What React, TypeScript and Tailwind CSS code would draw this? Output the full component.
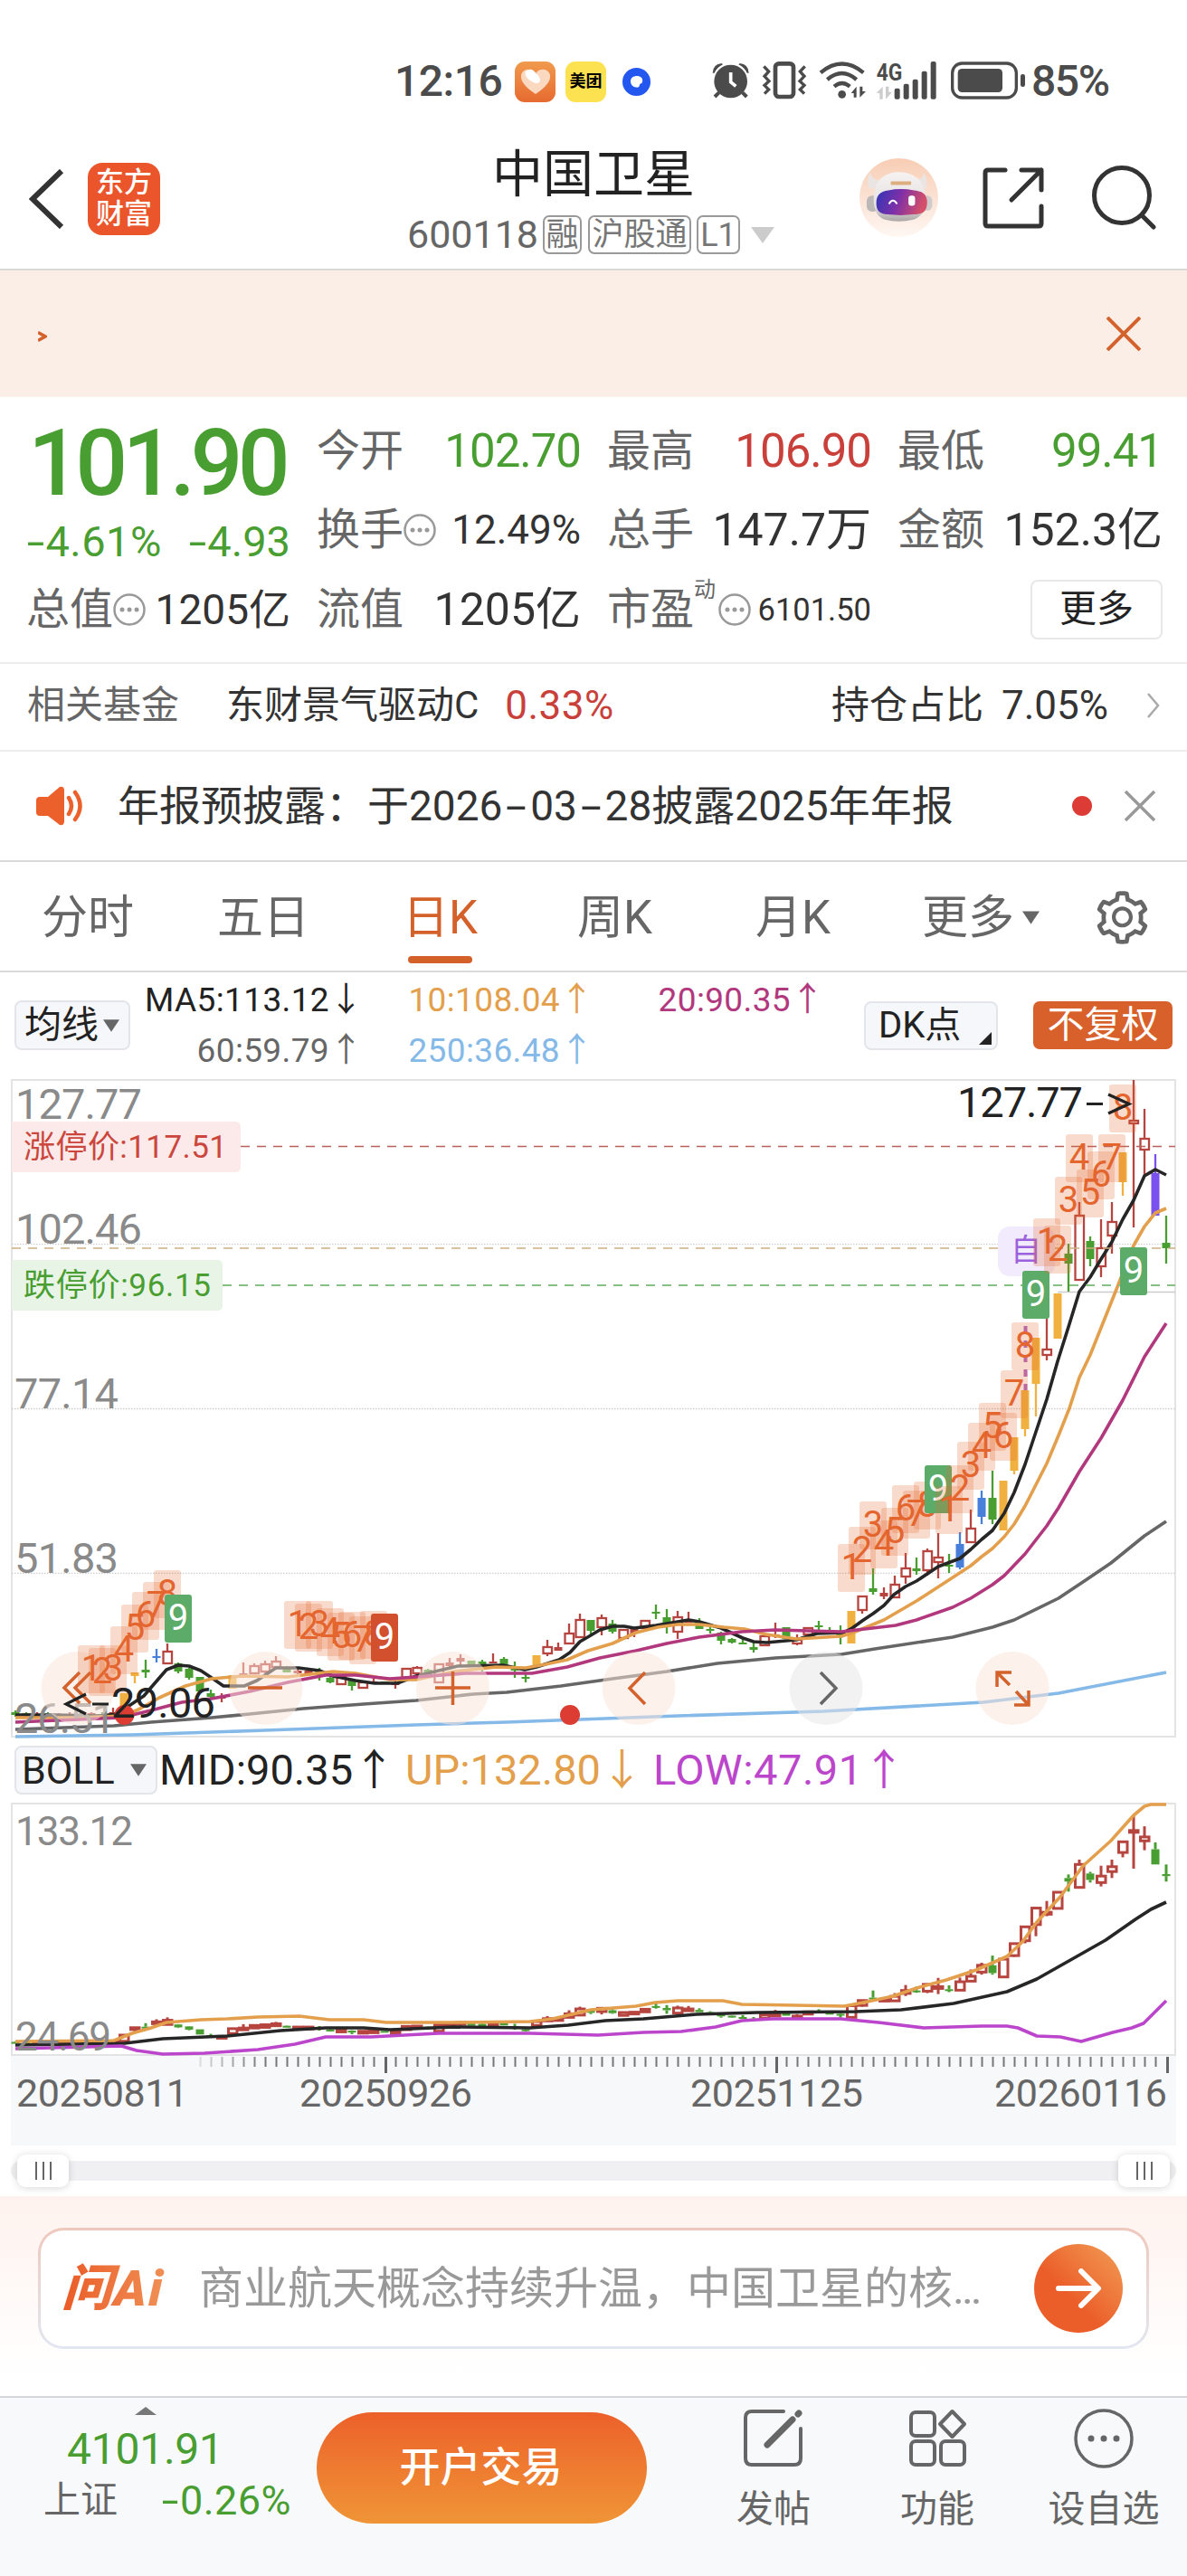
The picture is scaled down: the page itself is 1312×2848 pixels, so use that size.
import type { ReactNode } from "react";
import { AiOutlineSetting } from "react-icons/ai";

type Kind = "up" | "upSolid" | "down" | "gold" | "blue" | "violet";

// [kind, high, bodyTop, bodyBottom, low], one entry per trading day
const candles: [Kind, number, number, number, number][] = [
  ["down", 1891, 1893, 1896, 1898],
  ["down", 1893, 1894, 1897, 1899],
  ["upSolid", 1893, 1895, 1898, 1900],
  ["down", 1893, 1895, 1897, 1899],
  ["upSolid", 1894, 1895, 1898, 1900],
  ["upSolid", 1893, 1895, 1897, 1899],
  ["down", 1893, 1895, 1898, 1900],
  ["upSolid", 1893, 1894, 1896, 1899],
  ["down", 1893, 1895, 1897, 1899],
  ["upSolid", 1888, 1893, 1896, 1899],
  ["gold", 1872, 1872, 1891, 1891],
  ["gold", 1849, 1849, 1853, 1861],
  ["down", 1835, 1846, 1849, 1855],
  ["blue", 1823, 1831, 1832, 1838],
  ["up", 1817, 1826, 1839, 1839],
  ["down", 1838, 1839, 1848, 1850],
  ["down", 1844, 1845, 1855, 1857],
  ["down", 1854, 1854, 1870, 1870],
  ["down", 1868, 1872, 1876, 1877],
  ["upSolid", 1872, 1876, 1878, 1882],
  ["gold", 1852, 1852, 1867, 1867],
  ["upSolid", 1838, 1850, 1852, 1852],
  ["up", 1839, 1842, 1850, 1850],
  ["up", 1836, 1840, 1848, 1850],
  ["up", 1831, 1837, 1843, 1846],
  ["down", 1842, 1843, 1849, 1849],
  ["upSolid", 1844, 1847, 1850, 1853],
  ["upSolid", 1846, 1847, 1851, 1851],
  ["down", 1844, 1847, 1852, 1858],
  ["down", 1853, 1855, 1860, 1861],
  ["up", 1854, 1854, 1862, 1862],
  ["down", 1857, 1858, 1864, 1869],
  ["up", 1860, 1860, 1866, 1866],
  ["upSolid", 1855, 1859, 1861, 1861],
  ["down", 1859, 1859, 1862, 1862],
  ["upSolid", 1857, 1861, 1863, 1867],
  ["up", 1845, 1845, 1855, 1855],
  ["up", 1842, 1844, 1850, 1852],
  ["down", 1845, 1846, 1850, 1850],
  ["up", 1839, 1840, 1860, 1860],
  ["upSolid", 1833, 1838, 1842, 1843],
  ["upSolid", 1829, 1833, 1837, 1843],
  ["down", 1836, 1836, 1843, 1843],
  ["down", 1835, 1837, 1845, 1848],
  ["upSolid", 1828, 1837, 1839, 1839],
  ["down", 1832, 1834, 1842, 1842],
  ["down", 1837, 1844, 1847, 1855],
  ["down", 1849, 1854, 1856, 1860],
  ["gold", 1830, 1830, 1842, 1842],
  ["up", 1813, 1821, 1828, 1831],
  ["upSolid", 1816, 1821, 1825, 1825],
  ["up", 1795, 1806, 1817, 1817],
  ["up", 1784, 1791, 1810, 1810],
  ["down", 1791, 1791, 1803, 1807],
  ["up", 1785, 1789, 1799, 1808],
  ["down", 1791, 1795, 1804, 1806],
  ["up", 1801, 1802, 1811, 1811],
  ["upSolid", 1800, 1801, 1806, 1810],
  ["up", 1791, 1792, 1800, 1800],
  ["down", 1774, 1782, 1784, 1790],
  ["down", 1779, 1788, 1795, 1806],
  ["up", 1781, 1788, 1804, 1812],
  ["upSolid", 1782, 1791, 1794, 1794],
  ["down", 1789, 1794, 1801, 1801],
  ["down", 1798, 1801, 1803, 1806],
  ["down", 1804, 1805, 1814, 1818],
  ["down", 1811, 1812, 1816, 1817],
  ["down", 1810, 1816, 1817, 1817],
  ["down", 1816, 1821, 1824, 1827],
  ["up", 1808, 1809, 1819, 1819],
  ["upSolid", 1794, 1807, 1809, 1811],
  ["down", 1799, 1799, 1812, 1812],
  ["up", 1807, 1813, 1817, 1819],
  ["up", 1799, 1800, 1807, 1807],
  ["down", 1792, 1797, 1799, 1802],
  ["down", 1799, 1803, 1804, 1807],
  ["down", 1797, 1806, 1808, 1818],
  ["gold", 1781, 1781, 1817, 1817],
  ["up", 1764, 1765, 1780, 1784],
  ["down", 1734, 1756, 1760, 1763],
  ["upSolid", 1755, 1761, 1765, 1768],
  ["up", 1742, 1752, 1766, 1767],
  ["up", 1717, 1734, 1743, 1751],
  ["down", 1722, 1734, 1737, 1741],
  ["up", 1712, 1715, 1736, 1742],
  ["up", 1695, 1722, 1727, 1745],
  ["down", 1718, 1730, 1732, 1739],
  ["blue", 1694, 1707, 1733, 1735],
  ["up", 1669, 1690, 1705, 1706],
  ["blue", 1648, 1656, 1677, 1685],
  ["down", 1626, 1656, 1680, 1685],
  ["gold", 1637, 1637, 1692, 1692],
  ["gold", 1589, 1589, 1626, 1630],
  ["gold", 1537, 1537, 1580, 1588],
  ["gold", 1479, 1479, 1530, 1566],
  ["up", 1457, 1492, 1498, 1504],
  ["gold", 1430, 1430, 1480, 1480],
  ["down", 1375, 1386, 1397, 1428],
  ["up", 1329, 1344, 1415, 1416],
  ["down", 1367, 1372, 1392, 1400],
  ["up", 1348, 1380, 1400, 1412],
  ["up", 1329, 1351, 1366, 1386],
  ["gold", 1274, 1274, 1307, 1322],
  ["up", 1194, 1239, 1242, 1357],
  ["up", 1226, 1259, 1271, 1300],
  ["violet", 1276, 1297, 1344, 1344],
  ["down", 1344, 1374, 1380, 1397],
];

// [day index, top, count, solid fill]
const marks: [number, number, string, string?][] = [
  [7, 1819, "1"], [8, 1822, "2"], [9, 1819, "3"], [10, 1798, "4"],
  [11, 1774, "5"], [12, 1760, "6"], [13, 1749, "7"], [14, 1736, "8"],
  [15, 1763, "9", "#5cab69"],
  [26, 1770, "1"], [27, 1773, "2"], [28, 1770, "3"], [29, 1778, "4"],
  [30, 1783, "5"], [31, 1782, "6"], [32, 1787, "7"], [33, 1781, "8"],
  [34, 1784, "9", "#d2502d"],
  [77, 1707, "1"], [78, 1688, "2"], [79, 1660, "3"], [80, 1681, "4"],
  [81, 1667, "5"], [82, 1642, "6"], [83, 1648, "7"], [84, 1638, "8"],
  [85, 1620, "9", "#5cab69"],
  [86, 1643, "1"], [87, 1620, "2"], [88, 1594, "3"], [89, 1573, "4"],
  [90, 1551, "5"], [91, 1562, "6"], [92, 1515, "7"], [93, 1462, "8"],
  [94, 1405, "9", "#5cab69"],
  [95, 1347, "1"], [96, 1355, "2"], [97, 1301, "3"], [98, 1254, "4"],
  [99, 1293, "5"], [100, 1273, "6"], [101, 1254, "7"], [102, 1199, "8"],
  [103, 1379, "9", "#5cab69"],
];

const ma5 =
  "17,1896 60,1896 110,1897 130,1895 144,1885 159,1875 171,1861 184,1846 197,1841 209,1842 222,1847 234,1855 247,1864 270,1864 284,1858 305,1844 330,1844 353,1847 368,1853 393,1858 414,1861 439,1861 460,1853 485,1847 506,1842 556,1841 580,1846 593,1843 618,1835 630,1827 641,1815 653,1808 663,1802 677,1798 690,1798 701,1800 725,1797 761,1791 773,1793 797,1800 821,1811 833,1815 847,1816 880,1813 903,1806 932,1805 942,1800 953,1792 965,1784 977,1775 988,1763 1001,1754 1013,1748 1037,1732 1061,1723 1073,1713 1085,1702 1097,1692 1110,1673 1121,1650 1133,1619 1145,1583 1157,1547 1169,1505 1181,1467 1193,1428 1205,1412 1217,1392 1229,1373 1241,1348 1253,1327 1265,1300 1277,1293 1289,1299";
const ma10 =
  "17,1899 84,1899 138,1897 155,1889 176,1877 205,1864 234,1856 268,1853 318,1854 368,1848 393,1850 431,1857 460,1857 502,1848 548,1843 581,1844 603,1840 627,1835 650,1825 677,1817 703,1805 727,1799 749,1796 773,1796 800,1799 823,1801 847,1807 880,1812 930,1809 943,1805 977,1791 1001,1777 1013,1770 1047,1748 1073,1731 1085,1721 1097,1712 1110,1699 1121,1685 1133,1665 1157,1618 1170,1587 1182,1557 1193,1523 1205,1498 1233,1428 1253,1377 1265,1356 1277,1341 1289,1336";
const ma20 =
  "17,1904 134,1899 167,1891 201,1882 234,1878 276,1870 318,1860 360,1852 393,1852 431,1856 460,1854 515,1850 588,1850 627,1843 663,1833 703,1825 737,1817 773,1810 820,1804 857,1802 893,1803 930,1804 990,1797 1013,1791 1053,1777 1073,1767 1097,1752 1110,1742 1133,1718 1157,1687 1170,1667 1193,1627 1217,1590 1241,1548 1265,1500 1289,1463";
const ma60 =
  "17,1912 126,1908 167,1904 234,1899 276,1895 335,1889 402,1884 460,1880 523,1873 560,1871 620,1864 677,1856 737,1848 793,1839 857,1833 930,1829 967,1823 1053,1810 1097,1799 1121,1791 1170,1767 1200,1747 1228,1728 1265,1698 1289,1682";
const ma250 = "17,1920 146,1918 293,1913 460,1907 560,1904 750,1897 910,1892 1087,1882 1170,1872 1289,1849";

const bollUp =
  "17,2257 126,2256 146,2248 167,2242 184,2236 222,2233 251,2232 285,2230 331,2229 364,2233 402,2233 427,2236 502,2236 586,2235 611,2232 653,2222 703,2218 724,2214 749,2212 799,2212 820,2216 879,2217 933,2218 954,2214 987,2207 1013,2198 1046,2189 1079,2178 1113,2163 1130,2147 1146,2125 1172,2097 1197,2063 1228,2035 1253,2007 1265,1997 1272,1995 1289,1995";
const bollMid =
  "17,2261 138,2259 180,2254 251,2251 310,2245 360,2242 402,2242 431,2244 502,2241 586,2242 628,2239 669,2234 711,2232 770,2227 837,2225 946,2224 996,2222 1054,2215 1113,2202 1146,2188 1192,2162 1222,2145 1255,2122 1272,2111 1289,2103";
const bollLow =
  "17,2265 134,2262 151,2267 180,2271 226,2270 285,2266 326,2260 360,2252 410,2252 485,2248 586,2248 661,2250 711,2247 753,2246 791,2241 820,2234 854,2232 929,2232 971,2236 1021,2242 1085,2240 1113,2240 1125,2242 1146,2251 1172,2252 1195,2257 1230,2247 1251,2242 1264,2237 1276,2225 1289,2212";

const colors: Record<Kind, string> = {
  up: "#b6443f",
  upSolid: "#b6443f",
  down: "#489e30",
  gold: "#f0b140",
  blue: "#487fdb",
  violet: "#7a50ee",
};

const dayX = (i: number) => 17 + i * 12;
const toBoll = (y: number) => 2007.7 + (y - 1194) * 0.3574;

function Candle({ x, color, hollow, high, top, bottom, low, stroke = 2.3 }: { x: number; color: string; hollow: boolean; high: number; top: number; bottom: number; low: number; stroke?: number }) {
  const h = Math.max(bottom - top, 2);
  return (
    <g stroke={color} strokeWidth={stroke}>
      {high < top && <line x1={x} x2={x} y1={high} y2={top} />}
      {low > bottom && <line x1={x} x2={x} y1={bottom} y2={low} />}
      {hollow ? (
        <rect x={x - 4.5} y={top} width="9.5" height={h} fill="white" />
      ) : (
        <rect x={x - 4.5} y={top} width="9" height={h} fill={color} stroke="none" />
      )}
    </g>
  );
}

function RoundButton({ x, gray, d }: { x: number; gray?: boolean; d: string }) {
  return (
    <g>
      <circle cx={x} cy="1866.5" r="40.5" fill={gray ? "#e6e6e6" : "#f9e4d8"} opacity="0.52" />
      <path d={d} fill="none" stroke={gray ? "#666" : "#d4622c"} strokeWidth="3.5" />
    </g>
  );
}

function MainChart() {
  return (
    <svg className="block h-[730px] w-[1312px]" viewBox="0 1192 1312 730">
      <rect x="13" y="1194" width="1286" height="726" fill="none" stroke="#e3e3e3" strokeWidth="2" />
      <g stroke="#cfcfcf" strokeWidth="1.3" strokeDasharray="1.5 1.5">
        <path d="M13 1375.7H1299M13 1557.5H1299M13 1739.3H1299" />
      </g>
      <path d="M1169 1428.5H1299" stroke="#ccc" strokeWidth="1.3" />

      {candles.map(([kind, high, top, bottom, low], i) => (
        <Candle key={i} x={dayX(i)} color={colors[kind]} hollow={kind === "up"} high={high} top={top} bottom={bottom} low={low} />
      ))}
      <path d="M1133.5 1466V1537" stroke="#b06ac4" strokeWidth="4" strokeDasharray="8 8" />

      <g fill="none" strokeWidth="3.6" strokeLinejoin="round">
        <polyline points={ma250} stroke="#84b9e8" />
        <polyline points={ma60} stroke="#666" />
        <polyline points={ma5} stroke="#262626" />
        <polyline points={ma10} stroke="#e39f4c" />
        <polyline points={ma20} stroke="#b2387e" />
      </g>

      <g strokeDasharray="10 8">
        <path d="M266 1267.5H1299" stroke="#b9625c" strokeWidth="1.6" />
        <path d="M13 1380H1299" stroke="#cbb083" strokeWidth="1.6" />
        <path d="M246 1421H1299" stroke="#86c084" strokeWidth="2" />
      </g>

      <g fontSize="47" fill="#8a8a8a">
        <text x="17" y="1237" textLength="140">127.77</text>
        <text x="17" y="1375" textLength="140">102.46</text>
        <text x="16" y="1557" textLength="115">77.14</text>
        <text x="16" y="1739" textLength="115">51.83</text>
        <text x="16" y="1916" textLength="112">26.51</text>
      </g>

      <circle cx="137.5" cy="1896" r="11" fill="#dc3c31" />
      <circle cx="630" cy="1896" r="11" fill="#dc3c31" />

      <RoundButton x={86} d="M88 1849L71 1866L88 1883M100 1849L83 1866L100 1883" />
      <RoundButton x={294} d="M274 1866H312" />
      <RoundButton x={500.5} d="M481 1866H520M500.5 1848V1885" />
      <RoundButton x={706} d="M713 1849L696 1866.5L713 1884" />
      <RoundButton x={913} gray d="M907 1849L924 1866.5L907 1884" />
      <RoundButton x={1119} d="M1102 1865V1849H1118M1102 1849L1116 1863M1137 1869V1885H1121M1137 1885L1123 1870" />

      <rect x="1103" y="1356" width="63" height="55" rx="13" fill="#f1ebfd" />
      <text x="1134" y="1394" fontSize="34" textAnchor="middle" fill="#9b62dc">自</text>

      {marks.map(([i, top, label, solid]) => (
        <g key={i}>
          <rect x={dayX(i) - 15} y={top} width="30" height="53" rx="3" fill={solid ?? "#e66a2c"} opacity={solid ? 1 : 0.24} />
          <text x={dayX(i)} y={top + 39} fontSize="40" textAnchor="middle" fill={solid ? "white" : "#e4652e"}>{label}</text>
        </g>
      ))}

      <path d="M13 1240H260Q266 1240 266 1246V1290Q266 1296 260 1296H13Z" fill="#fbeae9" />
      <path d="M13 1393H240Q246 1393 246 1399V1443Q246 1449 240 1449H13Z" fill="#e8f4e6" />
      <text x="26" y="1280" fontSize="35" fill="#cb463c" textLength="225">涨停价:117.51</text>
      <text x="26" y="1433" fontSize="35" fill="#489e30" textLength="207">跌停价:96.15</text>

      <g fontSize="47" fill="#222">
        <text x="1058" y="1235" textLength="139">127.77</text>
        <path d="M1201 1220.5H1219M1225 1210L1248 1220.5L1225 1231" fill="none" stroke="#222" strokeWidth="3.2" />
        <text x="123" y="1899" textLength="115">29.06</text>
        <path d="M102 1884H120M95 1873L73 1884L95 1895" fill="none" stroke="#222" strokeWidth="3.2" />
      </g>
    </svg>
  );
}

function BollChart() {
  return (
    <svg className="block h-[380px] w-[1312px]" viewBox="0 1992 1312 380">
      <defs>
        <linearGradient id="tickFade" x1="210" x2="290" y1="0" y2="0" gradientUnits="userSpaceOnUse">
          <stop offset="0" stopColor="#777" stopOpacity="0.1" />
          <stop offset="1" stopColor="#777" />
        </linearGradient>
      </defs>
      <rect x="12" y="2272" width="1288" height="100" fill="#f7f8fa" />
      <rect x="13" y="1994" width="1286" height="278" fill="white" stroke="#e3e3e3" strokeWidth="2" />
      {candles.map(([kind, high, top, bottom, low], i) => {
        const green = kind === "down" || kind === "violet";
        return (
          <Candle
            key={i}
            x={dayX(i)}
            color={green ? colors.down : colors.up}
            hollow={!green}
            high={toBoll(high)}
            top={toBoll(top)}
            bottom={toBoll(bottom)}
            low={toBoll(low)}
            stroke={3}
          />
        );
      })}
      <g fill="none" strokeWidth="3.6" strokeLinejoin="round">
        <polyline points={bollMid} stroke="#262626" />
        <polyline points={bollUp} stroke="#e39f4c" />
        <polyline points={bollLow} stroke="#bb46cb" />
      </g>
      <g fontSize="44" fill="#8a8a8a">
        <text x="17" y="2040" textLength="130">133.12</text>
        <text x="17" y="2267" textLength="106">24.69</text>
      </g>
      {candles.slice(17).map((_, i) => {
        const major = (i + 17) % 36 === 34;
        return (
          <rect
            key={i}
            x={dayX(i + 17) - (major ? 0 : 0.5)}
            y="2274"
            width={major ? 3 : 2}
            height={major ? 18 : 11}
            fill={major ? "#666" : i < 6 ? "url(#tickFade)" : "#777"}
          />
        );
      })}
      <g fontSize="43" fill="#666">
        <text x="18" y="2329" textLength="190">20250811</text>
        <text x="331" y="2329" textLength="191">20250926</text>
        <text x="763" y="2329" textLength="191">20251125</text>
        <text x="1099" y="2329" textLength="191">20260116</text>
      </g>
    </svg>
  );
}

function StatusBar() {
  return (
    <div className="flex h-[150px] items-center pt-[30px] pl-[436px] text-[#4b4b4b]">
      <span className="w-[133px] text-[48px] leading-none font-medium tracking-[-0.01em]">12:16</span>
      <div className="flex h-[45px] w-[45px] items-center justify-center rounded-[11px] bg-linear-to-b from-[#f09a4d] to-[#e66a30]">
        <svg className="h-[30px] w-[36px]" viewBox="0 0 36 30">
          <path d="M18 29C6 21 1 14 2 8C4 0 14 0 18 6C22 0 32 0 34 8C35 14 30 21 18 29Z" fill="#fbd9c0" />
          <path d="M18 17C10 14 5 9 7 4C12 -1 17 3 18 6C23 9 26 17 18 17Z" fill="white" />
        </svg>
      </div>
      <div className="ml-[11px] flex h-[45px] w-[45px] items-center justify-center rounded-[11px] bg-[#fce250] text-[18px] leading-none font-bold text-black">
        美团
      </div>
      <svg className="ml-[18px] h-[31px] w-[31px]" viewBox="0 0 31 31">
        <circle cx="15.5" cy="15.5" r="15.5" fill="#2457f0" />
        <path d="M9 15C9 11 12 9 16 9S23 11 22 16C21 18 19 17 19 19C19 21 17 22 15 21.500C11 21 9 18 9 15Z" fill="white" />
      </svg>
      <svg className="ml-[61px] h-[70px] w-[360px]" viewBox="0 0 1080 210" fill="currentColor">
        <circle cx="83" cy="105" r="55" />
        <path d="M23 77Q24 48 53 45L57 49Q38 58 29 77ZM143 77Q142 48 113 45L109 49Q128 58 137 77Z" />
        <path d="M44 142L30 156M122 142L136 156" stroke="currentColor" strokeWidth="12" />
        <path d="M83 75V107L100 121" fill="none" stroke="white" strokeWidth="11" />
        <rect x="231" y="46" width="60" height="110" rx="12" fill="none" stroke="currentColor" strokeWidth="14" />
        <path d="M193 55L209 72L195 88L210 104L195 118L209 132L195 146M329 55L313 72L327 88L312 104L327 118L313 132L327 146" fill="none" stroke="currentColor" strokeWidth="10" />
        <path d="M381 76Q452 17 523 76M403 99Q452 57 500 99M426 122Q452 100 478 122" fill="none" stroke="currentColor" strokeWidth="13" />
        <circle cx="452" cy="148" r="13" />
        <path d="M482 144L500 122V158H491V144ZM531 138L511 158V122H520V138Z" />
        <text x="566" y="101" fontSize="80" fontWeight="700" textLength="86" lengthAdjust="spacingAndGlyphs">4G</text>
        <path d="M566 144L587 122V164H577V144ZM618 140L597 164V122H607V140Z" fill="#ccc" />
        <rect x="626" y="128" width="18" height="36" rx="6" />
        <rect x="656" y="113" width="18" height="51" rx="6" />
        <rect x="686" y="98" width="18" height="66" rx="6" />
        <rect x="716" y="71" width="18" height="93" rx="6" />
        <rect x="746" y="39" width="18" height="125" rx="6" />
        <rect x="818" y="45" width="212" height="114" rx="32" fill="none" stroke="currentColor" strokeWidth="10" />
        <rect x="836" y="63" width="148" height="78" rx="14" />
        <rect x="1044" y="81" width="15" height="42" rx="7" />
      </svg>
      <span className="text-[48px] leading-none font-medium tracking-[-0.03em]">85%</span>
    </div>
  );
}

function Robot() {
  return (
    <svg className="h-[87px] w-[87px]" viewBox="0 0 262 262">
      <defs>
        <linearGradient id="halo" x1="0" y1="0" x2="0" y2="1">
          <stop offset="0" stopColor="#f8cdb4" />
          <stop offset="1" stopColor="#fef7f3" />
        </linearGradient>
        <linearGradient id="helmet" x1="0" y1="0" x2="0" y2="1">
          <stop offset="0" stopColor="#f6f2f1" />
          <stop offset="0.7" stopColor="#e4e1e0" />
          <stop offset="1" stopColor="#aaa6a6" />
        </linearGradient>
        <linearGradient id="visor" x1="0" y1="0" x2="1" y2="0.2">
          <stop offset="0" stopColor="#2f36b8" />
          <stop offset="0.5" stopColor="#7e2fa8" />
          <stop offset="1" stopColor="#d4506a" />
        </linearGradient>
      </defs>
      <circle cx="131" cy="131" r="131" fill="url(#halo)" />
      <path d="M35 46Q20 78 34 102L60 98L70 74Q40 74 35 46ZM213 48Q230 72 222 100L200 96L186 70Q212 74 213 48Z" fill="#eae5e3" />
      <rect x="24" y="124" width="40" height="54" rx="18" fill="#bcb8b7" />
      <rect x="206" y="124" width="36" height="50" rx="16" fill="#d0cccb" />
      <path d="M130 46C80 46 52 78 48 120C44 165 56 194 84 204Q130 216 180 204C214 192 226 160 220 120C214 76 182 46 130 46Z" fill="url(#helmet)" />
      <path d="M96 107Q137 98 182 107C214 110 226 124 225 148C224 176 212 186 180 187Q137 192 94 187C66 186 56 174 56 150C56 124 68 110 96 107Z" fill="url(#visor)" />
      <rect x="104" y="77" width="68" height="12" rx="3" fill="#dcae80" />
      <path d="M98 152Q111 130 125 152" fill="none" stroke="white" strokeWidth="6" />
      <rect x="163" y="124" width="22" height="34" rx="9" fill="white" />
    </svg>
  );
}

function Header() {
  return (
    <div className="flex h-[149px] items-center border-b-2 border-[#dadada] pl-8">
      <svg className="mb-2 h-[66px] w-[40px]" viewBox="0 0 40 66" fill="none" stroke="#333" strokeWidth="6">
        <path d="M36 2L4 33L36 64" />
      </svg>
      <div className="mb-2 ml-[25px] flex h-[80px] w-[80px] flex-col items-center justify-center gap-px rounded-[16px] bg-[#eb552b] text-[31px] leading-[34px] font-medium text-white">
        <span>东方</span>
        <span>财富</span>
      </div>
      <div className="ml-[267px] flex w-[424px] flex-col">
        <div className="-mt-[6px] ml-[100px] text-[56px] leading-[66px] text-[#222]">中国卫星</div>
        <div className="mt-[12px] ml-[6px] flex h-[44px] items-center text-[#666]">
          <span className="w-[150px] text-[43px] leading-none">600118</span>
          <span className="flex h-[43px] w-[43px] items-center justify-center rounded-[7px] border-2 border-[#999] text-[36px] leading-none text-[#777]">融</span>
          <span className="ml-[7px] flex h-[43px] w-[114px] items-center justify-center rounded-[7px] border-2 border-[#999] text-[35px] leading-none text-[#777]">沪股通</span>
          <span className="ml-[6px] flex h-[43px] w-[48px] items-center justify-center rounded-[7px] border-2 border-[#999] text-[36px] leading-none text-[#777]">L1</span>
          <svg className="ml-[12px] h-[18px] w-[26px]" viewBox="0 0 26 18"><path d="M0 0H26L13 18Z" fill="#ccc" /></svg>
        </div>
      </div>
      <div className="mb-[10px] ml-[82px] flex items-center">
        <Robot />
        <svg className="ml-[48px] h-[70px] w-[70px]" viewBox="0 0 70 70" fill="none" stroke="#333" strokeWidth="5" strokeLinecap="round" strokeLinejoin="round">
          <path d="M26 4H7Q4 4 4 7V63Q4 66 7 66H63Q66 66 66 63V44M44 4H66V26M66 4L33 37" />
        </svg>
        <svg className="ml-[51px] h-[74px] w-[74px]" viewBox="0 0 74 74" fill="none" stroke="#333" strokeWidth="5" strokeLinecap="round">
          <circle cx="34" cy="34" r="30.500" />
          <path d="M56 56L69 69" />
        </svg>
      </div>
    </div>
  );
}

function Dash() {
  return <span className="mx-[4px] inline-block scale-x-150">-</span>;
}

function Cell({ label, children, className = "" }: { label: ReactNode; children: ReactNode; className?: string }) {
  return (
    <div className="flex items-center justify-between leading-none">
      <span className="flex items-center text-[48px] text-[#666]">{label}</span>
      <span className={`whitespace-nowrap ${className}`}>{children}</span>
    </div>
  );
}

function MoreDots() {
  return (
    <svg className="h-[36px] w-[36px]" viewBox="0 0 36 36" fill="#999">
      <circle cx="18" cy="18" r="16.500" fill="none" stroke="#999" strokeWidth="2.500" />
      <circle cx="10" cy="18" r="2.500" />
      <circle cx="18" cy="18" r="2.500" />
      <circle cx="26" cy="18" r="2.500" />
    </svg>
  );
}

function Quote() {
  return (
    <div className="grid h-[293px] auto-rows-[87.5px] grid-cols-[292px_292px_292px_293px] gap-x-[29px] pt-[16px] pl-[29px]">
      <div className="row-span-2 flex flex-col text-[#489e30]">
        <span className="mt-[6px] ml-[2px] text-[102px] leading-none font-medium tracking-[-0.056em]">101.90</span>
        <div className="mt-[12px] flex justify-between text-[47px] leading-none">
          <span className="tracking-[0.01em]"><Dash />4.61%</span>
          <span><Dash />4.93</span>
        </div>
      </div>
      <Cell label="今开" className="text-[51px] tracking-[-0.02em] text-[#489e30]">102.70</Cell>
      <Cell label="最高" className="text-[51px] tracking-[-0.02em] text-[#c9403a]">106.90</Cell>
      <Cell label="最低" className="text-[51px] tracking-[-0.02em] text-[#489e30]">99.41</Cell>
      <Cell label={<>换手<MoreDots /></>} className="text-[44px] text-[#333]">12.49%</Cell>
      <Cell label="总手" className="text-[50px] text-[#333]">147.7万</Cell>
      <Cell label="金额" className="text-[50px] text-[#333]">152.3亿</Cell>
      <Cell label={<>总值<MoreDots /></>} className="text-[46px] text-[#333]">1205亿</Cell>
      <Cell label="流值" className="text-[50px] text-[#333]">1205亿</Cell>
      <Cell label={<>市盈<span className="mb-[44px] w-[27px] text-[24px]">动</span><MoreDots /></>} className="text-[34.5px] text-[#333]">6101.50</Cell>
      <div className="flex items-center justify-end">
        <button className="h-[66px] w-[146px] rounded-[8px] border-2 border-[#e8e8e8] text-[41px] leading-none text-[#222]">更多</button>
      </div>
    </div>
  );
}

function FundRow() {
  return (
    <div className="flex h-[97px] items-center border-t-2 border-[#ececec] px-[30px] pb-[3px] text-[42px] leading-none text-[#333]">
      <span className="w-[220px] text-[#666]">相关基金</span>
      <span>东财景气驱动C</span>
      <span className="ml-[29px] text-[44px] tracking-[0.01em] text-[#c9403a]">0.33%</span>
      <span className="ml-auto">持仓占比</span>
      <span className="ml-[20px] text-[44px]">7.05%</span>
      <svg className="ml-[43px] h-[28px] w-[14px]" viewBox="0 0 14 28" fill="none" stroke="#aaa" strokeWidth="2.500"><path d="M1 1L12 14L1 27" /></svg>
    </div>
  );
}

function NewsRow() {
  return (
    <div className="flex h-[124px] items-center border-t-2 border-b-2 border-t-[#ececec] border-b-[#dadada] pl-[40px]">
      <svg className="h-[44px] w-[52px]" viewBox="0 0 52 44" fill="#eb602b">
        <path d="M4 12H13L26 1Q31 0 31 5V39Q31 44 26 43L13 33H4Q0 33 0 29V16Q0 12 4 12Z" />
        <path d="M36 13Q42 22 36 31M43 7Q54 22 43 37" fill="none" stroke="#eb602b" strokeWidth="4.500" strokeLinecap="round" />
      </svg>
      <span className="ml-[38px] w-[1055px] text-[46px] leading-none whitespace-nowrap text-[#333]">
        年报预披露：于2026<span className="mx-[9px] inline-block scale-x-[1.8]">-</span>03<span className="mx-[9px] inline-block scale-x-[1.8]">-</span>28披露2025年年报
      </span>
      <span className="h-[22px] w-[22px] rounded-full bg-[#dc3c35]" />
      <svg className="ml-[36px] h-[34px] w-[34px]" viewBox="0 0 34 34" stroke="#999" strokeWidth="3.500"><path d="M1 1L33 33M33 1L1 33" /></svg>
    </div>
  );
}

function Caret({ className }: { className: string }) {
  return <svg className={className} viewBox="0 0 20 15"><path d="M0 0H20L10 15Z" fill="#666" /></svg>;
}

function Tabs() {
  return (
    <div className="flex h-[122px] items-center border-b-2 border-[#dadada] pt-[2px] text-[51px] leading-none text-[#666]">
      <span className="w-[193px] pl-[46px]">分时</span>
      <span className="w-[252px] pl-[47px]">五日</span>
      <div className="relative flex h-full w-[193px] items-center text-[#d4602a]">
        日K
        <span className="absolute bottom-[8px] left-[6px] h-[8px] w-[71px] rounded-full bg-[#d4602a]" />
      </div>
      <span className="w-[197px]">周K</span>
      <span className="w-[184px]">月K</span>
      <span>更多</span>
      <Caret className="ml-[9px] h-[15px] w-[19px]" />
      <AiOutlineSetting className="ml-[58px] h-[67px] w-[67px]" />
    </div>
  );
}

function Arrow({ children }: { children: string }) {
  return <span className="font-['Noto_Sans_CJK_SC'] leading-none tracking-normal">{children}</span>;
}

function MaRow() {
  return (
    <div className="flex h-[117px] items-center pl-[16px]">
      <div className="flex h-[55px] w-[128px] items-center rounded-[8px] border-2 border-[#e2e5e9] bg-[#f6f7fa] pl-[9px] text-[41px] leading-none text-[#222]">
        均线
        <Caret className="ml-[5px] h-[14px] w-[18px]" />
      </div>
      <div className="grid h-[112px] w-[767px] auto-rows-[56px] grid-cols-[257px_255px_255px] text-[37px] leading-[55px] tracking-[0.01em]">
        <span className="text-right text-[#222]">MA5:113.12<Arrow>↓</Arrow></span>
        <span className="text-right text-[#e39f4c]">10:108.04<Arrow>↑</Arrow></span>
        <span className="text-right text-[#b2387e]">20:90.35<Arrow>↑</Arrow></span>
        <span className="text-right text-[#666]">60:59.79<Arrow>↑</Arrow></span>
        <span className="text-right text-[#84b9e8]">250:36.48<Arrow>↑</Arrow></span>
      </div>
      <div className="relative ml-[44px] flex h-[54px] w-[148px] items-center rounded-[8px] border-2 border-[#e2e5e9] bg-[#f6f7fa] pl-[14px] text-[40px] leading-none text-[#222]">
        DK点
        <svg className="absolute right-[5px] bottom-[4px] h-[14px] w-[14px]" viewBox="0 0 14 14"><path d="M14 0V14H0Z" fill="#222" /></svg>
      </div>
      <div className="ml-[39px] flex h-[53px] w-[154px] items-center justify-center rounded-[7px] bg-[#d8602a] text-[41px] leading-none text-white">不复权</div>
    </div>
  );
}

function BollRow() {
  return (
    <div className="flex h-[70px] items-center pl-[16px] text-[47px] leading-none whitespace-nowrap">
      <div className="flex h-[54px] w-[158px] items-center rounded-[8px] border-2 border-[#e2e5e9] bg-[#f6f7fa] pl-[6px] text-[43px] text-[#222]">
        BOLL
        <Caret className="mr-[10px] ml-auto h-[14px] w-[18px]" />
      </div>
      <div className="mb-[5px] ml-[2px] flex">
        <span className="w-[272px] text-[#222]">MID:90.35<Arrow>↑</Arrow></span>
        <span className="w-[274px] text-[#e39f4c]">UP:132.80<Arrow>↓</Arrow></span>
        <span className="tracking-[0.01em] text-[#bb46cb]">LOW:47.91<Arrow>↑</Arrow></span>
      </div>
    </div>
  );
}

function Handle() {
  return (
    <div className="flex h-[36px] w-[57px] items-center justify-center gap-[6px] rounded-[9px] bg-white shadow-[0_1px_8px_rgba(0,0,0,0.16)]">
      <span className="h-[20px] w-[2px] bg-[#666]" />
      <span className="h-[20px] w-[2px] bg-[#666]" />
      <span className="h-[20px] w-[2px] bg-[#666]" />
    </div>
  );
}

function AskAi() {
  return (
    <div className="h-[221px] bg-linear-to-b from-[#fef2ee] to-white to-90% px-[42px] pt-[35px]">
      <div className="h-[134px] rounded-[28px] bg-linear-to-b from-[#efc8bd] to-[#e1e7f1] p-[3px]">
        <div className="flex h-full items-center rounded-[25px] bg-white pl-[24px]">
          <span className="w-[151px] -skew-x-3 bg-linear-to-r from-[#ea5a26] to-[#f0965a] to-85% bg-clip-text text-[55px] leading-[66px] font-black tracking-[0.04em] text-transparent italic">问Ai</span>
          <span className="w-[923px] text-[49px] leading-none whitespace-nowrap text-[#999]">商业航天概念持续升温，中国卫星的核<span className="tracking-[-3px]">...</span></span>
          <div className="flex h-[98px] w-[98px] items-center justify-center rounded-full bg-linear-to-tr from-[#eb5d29] from-40% to-[#f09c55]">
            <svg className="h-[44px] w-[52px]" viewBox="0 0 52 44" fill="none" stroke="white" strokeWidth="6" strokeLinecap="round" strokeLinejoin="round">
              <path d="M4 22H47M29 3L48 22L29 41" />
            </svg>
          </div>
        </div>
      </div>
    </div>
  );
}

function BottomBar() {
  return (
    <div className="flex h-[199px] border-t-2 border-[#d3d6da] bg-[#f7f9fa]">
      <div className="w-[350px]">
        <svg className="mt-[10px] ml-[149px] block h-[9px] w-[24px]" viewBox="0 0 24 9"><path d="M12 0L24 9H0Z" fill="#777" /></svg>
        <div className="mt-[14px] ml-[74px] text-[48px] leading-none tracking-[-0.005em] text-[#489e30]">4101.91</div>
        <div className="mt-[10px] ml-[48px] flex items-center leading-none">
          <span className="w-[130px] text-[41px] text-[#666]">上证</span>
          <span className="text-[45px] tracking-[0.01em] text-[#489e30]"><Dash />0.26%</span>
        </div>
      </div>
      <button className="mt-[16px] h-[123px] w-[365px] rounded-full bg-linear-to-b from-[#ec602a] to-[#ef9436] pr-[2px] text-[45px] font-medium text-white">开户交易</button>
      <div className="ml-[95px] flex flex-col items-center text-[41px] leading-none text-[#666]">
        <svg className="mt-[12px] h-[66px] w-[66px]" viewBox="0 0 66 66" fill="none" stroke="#666" strokeWidth="4" strokeLinecap="round">
          <path d="M44 3H9Q2 3 2 10V55Q2 62 9 62H56Q63 62 63 55V22" />
          <path d="M26 40L54 12" strokeWidth="7" />
          <path d="M60 6L61 5" strokeWidth="7" />
        </svg>
        <span className="mt-[25px] w-[90px] text-center">发帖</span>
      </div>
      <div className="ml-[94px] flex flex-col items-center text-[41px] leading-none text-[#666]">
        <svg className="mt-[12px] h-[66px] w-[66px]" viewBox="0 0 66 66" fill="none" stroke="#666" strokeWidth="4" strokeLinejoin="round">
          <rect x="4" y="4" width="26" height="26" rx="5" />
          <rect x="4" y="36" width="26" height="26" rx="5" />
          <rect x="37" y="36" width="26" height="26" rx="5" />
          <path d="M49.500 3L63 17L49.500 31L36 17Z" />
        </svg>
        <span className="mt-[25px] w-[84px] text-center whitespace-nowrap">功能</span>
      </div>
      <div className="ml-[80px] flex flex-col items-center text-[41px] leading-none text-[#666]">
        <svg className="mt-[12px] h-[66px] w-[66px]" viewBox="0 0 66 66" fill="#666">
          <circle cx="33" cy="33" r="31" fill="none" stroke="#666" strokeWidth="3.500" />
          <circle cx="19" cy="33" r="3.500" />
          <circle cx="33" cy="33" r="3.500" />
          <circle cx="47" cy="33" r="3.500" />
        </svg>
        <span className="mt-[25px] w-[124px] text-center whitespace-nowrap">设自选</span>
      </div>
    </div>
  );
}

export default function App() {
  return (
    <div className="h-[2848px] w-[1312px] overflow-hidden bg-white font-['Roboto','Noto_Sans_CJK_SC',sans-serif]">
      <StatusBar />
      <Header />
      <div className="flex h-[140px] items-center justify-between bg-[#fbeee6] pr-[51px] pl-[42px]">
        <svg className="mt-[6px] h-[12px] w-[10px]" viewBox="0 0 10 12" fill="none" stroke="#d4622c" strokeWidth="3.500"><path d="M0 1.500L8 6L0 10.500" /></svg>
        <svg className="h-[38px] w-[38px]" viewBox="0 0 38 38" stroke="#d4622c" strokeWidth="4"><path d="M1 1L37 37M37 1L1 37" /></svg>
      </div>
      <Quote />
      <FundRow />
      <NewsRow />
      <Tabs />
      <MaRow />
      <MainChart />
      <BollRow />
      <BollChart />
      <div className="h-[56px] px-[12px] pt-[10px]">
        <div className="mt-[7px] flex h-[22px] items-center justify-between rounded-full bg-[#f0f0f2] px-[7px]">
          <Handle />
          <Handle />
        </div>
      </div>
      <AskAi />
      <BottomBar />
    </div>
  );
}
